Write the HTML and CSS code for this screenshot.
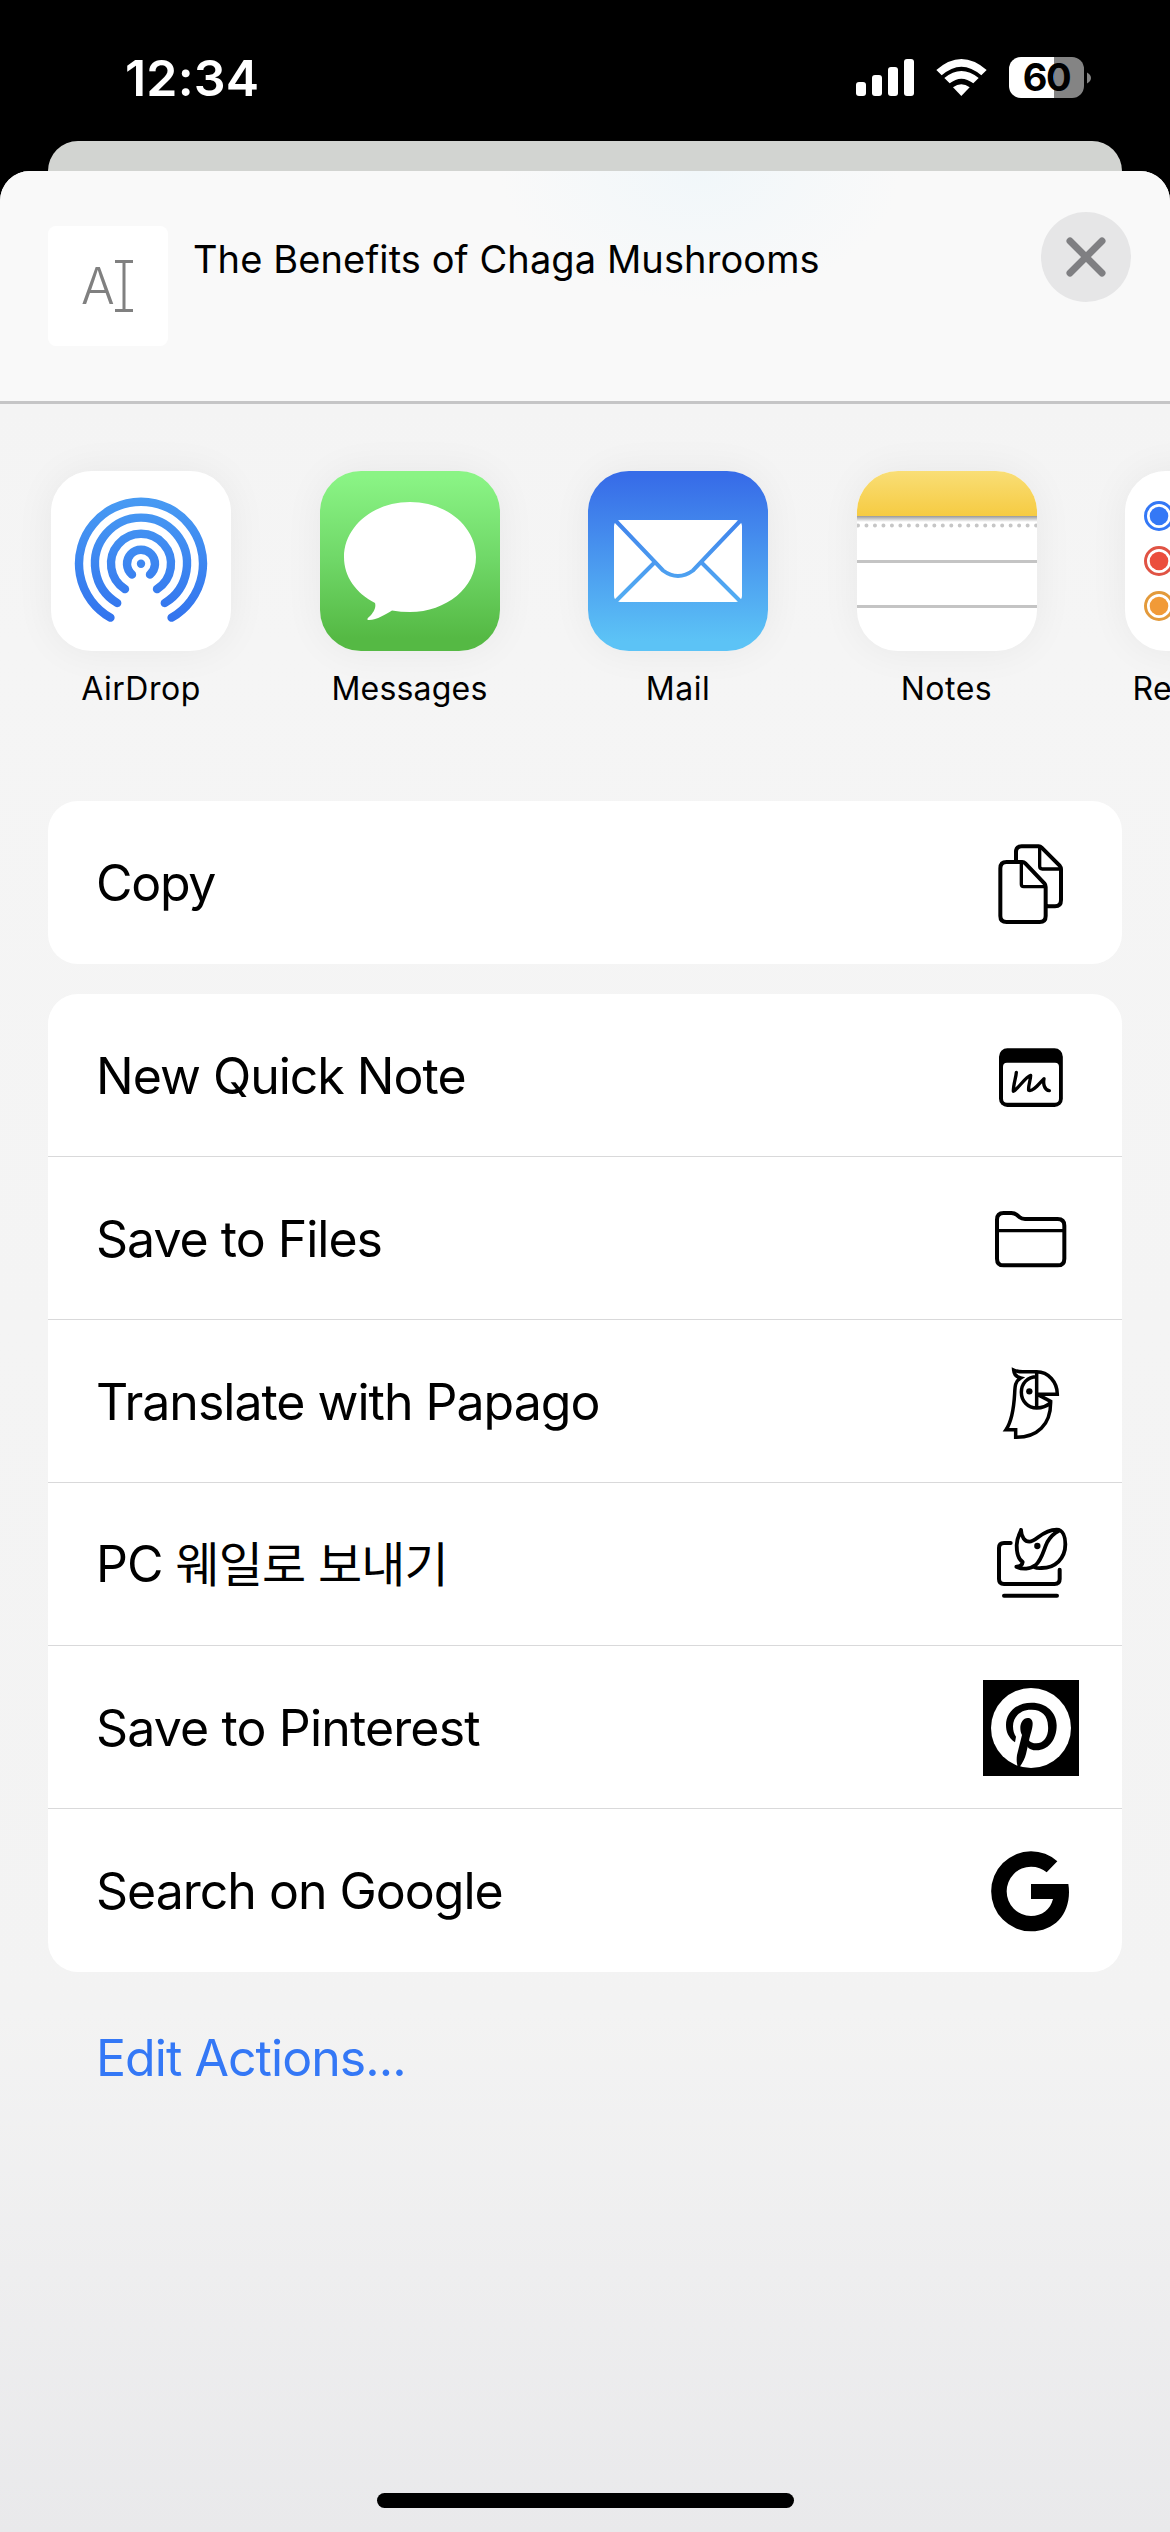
FILE: index.html
```html
<!DOCTYPE html>
<html lang="en">
<head>
<meta charset="utf-8">
<title>Share</title>
<link rel="stylesheet" href="styles.css">
</head>
<body>
<div class="phone">
  <div class="status">
    <span class="time">12:34</span>
    <div class="indicators">
      <svg class="signal" viewBox="0 0 58 37"><rect x="0" y="23" width="10" height="14" rx="3"/><rect x="16" y="16" width="10" height="21" rx="3"/><rect x="32" y="8" width="10" height="29" rx="3"/><rect x="48" y="0" width="10" height="37" rx="3"/></svg>
      <svg class="wifi" viewBox="348 87 153 111"><path d="M349 120Q424 54 500 120L484 136Q424 84 365 136Z"/><path d="M373 144Q424 102 476 144L460 160Q424 132 389 160Z"/><path d="M399 172Q424 153 449 172L424 198Z"/></svg>
      <div class="battery"><div class="charge">60</div><svg class="nub" viewBox="0 0 5 14"><path d="M0 0Q5 3 5 7T0 14Z"/></svg></div>
    </div>
  </div>
  <div class="behind"></div>
  <main class="sheet">
    <header class="header">
      <div class="thumb">
        <span class="letter">A</span>
        <svg class="ibeam" viewBox="0 0 20 52"><path d="M1 1.5H19M10 1.5V50.5M1 50.5H19"/></svg>
      </div>
      <h1 class="title">The Benefits of Chaga Mushrooms</h1>
      <button class="close" aria-label="Close"><svg viewBox="0 0 90 90"><path d="M29 29L61 61M61 29L29 61"/></svg></button>
    </header>

    <section class="apps">
      <div class="app">
        <svg class="app-icon" viewBox="0 0 180 180">
          <defs><linearGradient id="drop" gradientUnits="userSpaceOnUse" x1="0" y1="26" x2="0" y2="152"><stop offset="0" stop-color="#489bf3"/><stop offset="1" stop-color="#3273ee"/></linearGradient></defs>
          <rect width="180" height="180" fill="#fff"/>
          <g fill="none" stroke="url(#drop)" stroke-width="8.4" stroke-linecap="round"><path d="M59.4 146.6A62 62 0 1 1 120.6 146.6"/><path d="M66.2 132A46 46 0 1 1 113.8 132"/><path d="M74 118.1A30 30 0 1 1 106 118.1"/><path d="M81 103.5A14 14 0 1 1 99 103.5"/></g>
          <circle cx="90" cy="92.7" r="4.2" fill="#3f88f0"/>
        </svg>
        <span class="app-name">AirDrop</span>
      </div>
      <div class="app">
        <svg class="app-icon" viewBox="0 0 180 180">
          <defs><linearGradient id="msg" x2="0" y2="1"><stop offset=".03" stop-color="#8af485"/><stop offset=".5" stop-color="#6fd767"/><stop offset=".93" stop-color="#55b944"/></linearGradient></defs>
          <rect width="180" height="180" fill="url(#msg)"/>
          <path fill="#fff" d="M90 31C126.500 31 156 55.600 156 86S126.500 141 90 141Q81 141 72 139.500C66 143 57 149 49 149C46 149 47.500 147.500 49.500 145.500C53 142 56.500 137 55 132C36 122 24 106 24 86C24 55.600 53.500 31 90 31Z"/>
        </svg>
        <span class="app-name tight">Messages</span>
      </div>
      <div class="app">
        <svg class="app-icon" viewBox="0 0 180 180">
          <defs><linearGradient id="mail" gradientUnits="userSpaceOnUse" x1="0" y1="5" x2="0" y2="170"><stop offset="0" stop-color="#376ce8"/><stop offset="1" stop-color="#5cc3f6"/></linearGradient></defs>
          <rect width="180" height="180" fill="url(#mail)"/>
          <rect x="26" y="49" width="128" height="82" rx="6" fill="#fff"/>
          <path fill="none" stroke="url(#mail)" stroke-width="4" d="M26 48L75 99.500Q90 110.500 105 99.500L154 48M67 91L26 132M113 91L154 132"/>
        </svg>
        <span class="app-name">Mail</span>
      </div>
      <div class="app">
        <svg class="app-icon" viewBox="0 0 180 180">
          <defs><linearGradient id="note" x2="0" y2="1"><stop offset="0" stop-color="#f9de76"/><stop offset="1" stop-color="#f6cb42"/></linearGradient><linearGradient id="crease" x2="0" y2="1"><stop offset="0" stop-color="#999"/><stop offset="1" stop-color="#fff"/></linearGradient></defs>
          <rect width="180" height="180" fill="#fff"/>
          <rect width="180" height="45" fill="url(#note)"/><rect y="45" width="180" height="6" fill="url(#crease)"/>
          <path d="M1 54.500H181" fill="none" stroke="#c6c6c6" stroke-width="4" stroke-linecap="round" stroke-dasharray="0 8.480"/>
          <path d="M0 90.500H180M0 135.500H180" stroke="#c4c4c4" stroke-width="3"/>
        </svg>
        <span class="app-name">Notes</span>
      </div>
      <div class="app">
        <svg class="app-icon" viewBox="0 0 180 180">
          <rect width="180" height="180" fill="#fff"/>
          <g stroke-width="3" fill="none"><circle cx="34" cy="45" r="13.500" stroke="#3478f6"/><circle cx="34" cy="90" r="13.500" stroke="#e05344"/><circle cx="34" cy="135" r="13.500" stroke="#e39a3b"/></g>
          <circle cx="34" cy="45" r="9.300" fill="#3478f6"/><circle cx="34" cy="90" r="9.300" fill="#eb4e3d"/><circle cx="34" cy="135" r="9.300" fill="#f19a37"/>
        </svg>
        <span class="app-name">Reminders</span>
      </div>
    </section>

    <section class="actions">
      <div class="group">
        <div class="row"><span class="label copy">Copy</span>
          <svg class="glyph" viewBox="69 104 288 288"><path class="line" d="M187 185H140Q121 185 121 204V347Q121 365 140 365H239Q257 365 257 347V260Q257 254 253 249L196 189Q192 185 187 185ZM168 179V155Q168 138 185 138H236Q241 138 245 142L299 196Q303 201 303 206V299Q303 318 285 318H263"/><path class="line fine" d="M184 187V252Q184 259 191 259H255M239 140V198Q239 206 247 206H301"/></svg></div>
      </div>
      <div class="group">
        <div class="row"><span class="label">New Quick Note</span>
          <svg class="glyph" viewBox="69 24 288 288"><rect x="117" y="85" width="191.500" height="176" rx="25"/><rect x="129" y="128" width="168" height="120" rx="12" fill="#fff"/><path class="line fine" d="M169 157C168 173 160 192 160 214C174 208 196 170 212 166C212 181 204 197 206 211C219 217 240 187 252 176C249 191 253 211 268 212"/></svg></div>
        <div class="row"><span class="label">Save to Files</span>
          <svg class="glyph" viewBox="69 512 288 288"><path class="line" d="M111 598Q111 578 131 578H154Q164 578 171 584L179 591Q185 596 195 596H293Q313 596 313 616V715Q313 735 293 735H131Q111 735 111 715Z"/><path class="line fine" d="M113 631H311"/></svg></div>
        <div class="row"><span class="label">Translate with Papago</span>
          <svg class="glyph" viewBox="69 41 288 288"><path class="line bird" d="M230 94.500H188C176 94.500 168 92 161 89C162 101 170 110 182 113C165 123 165 138 164 159C161 212 154 245 138 268H167V291C231 292 273 254 272 183L232 162H292C292 125 265 94.500 230 94.500V203M230 109C203 109 184 129 184 156S204 203 230 203C247 203 261 197 272 187"/><circle cx="208" cy="153" r="9.500"/></svg></div>
        <div class="row"><span class="label">PC <span class="hangul">웨일로 보내기</span></span>
          <svg class="glyph" viewBox="69 50 288 288"><path class="line" d="M152 128H132Q117 128 117 143V236Q117 251 132 251H284Q299 251 299 236V208M132 286H291"/><path class="line whale" d="M183 89C179 102 170 113 170 135C170 162 175 177 188 185C187 194 181 199 169 199C187 208 211 207 226 195C247 177 250 149 262 125C272 108 282 98 297 91M183 89C184 111 195 124 208 124C230 124 245 89 290 88C309 88 316 110 316 132C316 175 285 203 245 203Q231 204 222 200"/><circle cx="232" cy="137" r="9.500"/></svg></div>
        <div class="row"><span class="label pinterest">Save to Pinterest</span>
          <svg class="glyph" viewBox="69 60 288 288"><rect x="69" y="60" width="288" height="288"/><circle cx="213" cy="204" r="120" fill="#fff"/><path d="M165 247C144 232 138 214 138 195C138 158 168 128 215 128C260 128 290 158 290 196C290 242 263 271 230 271C217 271 206 267 201 257L205 239C211 247 219 250 229 250C253 250 267 226 264 198C264 166 243 148 213 149C181 149 159 170 159 199C159 212 162 222 168 230Z"/><path d="M203 174C190 174 181 188 181 204C181 213 183 220 186 225L171 285C169 300 170 312 174 321H179C188 308 195 295 198 282L207 243C209 227 218 207 218 191C218 180 212 174 203 174Z"/></svg></div>
        <div class="row"><span class="label">Search on Google</span>
          <svg class="glyph" viewBox="69 548 288 288"><path d="M292 603A119.500 119.500 0 0 0 213 573A119.500 120 0 0 0 213 813C283 813 327 763 327 695Q327 683 325 671H213V716H279C271 748 246 767 213 767A73 74 0 0 1 213 619Q241 619 260 636Z"/></svg></div>
      </div>
      <a class="edit">Edit Actions...</a>
    </section>
    <div class="home"></div>
  </main>
</div>
</body>
</html>
```
FILE: styles.css
```css
* { box-sizing: border-box; }
body { margin: 0; background: #000; }
.phone {
  width: 1170px;
  height: 2532px;
  overflow: hidden;
  display: flex;
  flex-direction: column;
  background: #000;
  color: #000;
  font-family: Inter, "Noto Sans CJK KR", sans-serif;
}

.status {
  height: 141px;
  display: flex;
  justify-content: space-between;
  padding: 57px 79px 0 125px;
  color: #fff;
}
.time { font-size: 50px; font-weight: 600; line-height: 42px; letter-spacing: 0.2px; }
.indicators { display: flex; align-items: flex-start; fill: #fff; }
.signal { width: 58px; height: 37px; margin: 2px 22px 0 0; }
.wifi { width: 51px; height: 37px; margin: 2px 22px 0 0; }
.battery { display: flex; align-items: center; gap: 3px; }
.charge {
  width: 75px;
  height: 41px;
  border-radius: 12px;
  background: linear-gradient(90deg, #fff 60%, #848484 60%);
  color: #000;
  font-size: 38px;
  font-weight: 650;
  line-height: 41px;
  letter-spacing: -1.5px;
  text-align: center;
}
.nub { width: 4px; height: 14px; fill: #848484; }

.behind { height: 30px; margin: 0 48px; border-radius: 30px 30px 0 0; background: #d2d4d1; }
.sheet {
  flex: 1;
  display: flex;
  flex-direction: column;
  border-radius: 30px 30px 0 0;
  overflow: hidden;
  background: linear-gradient(#f3f3f3 0, #f5f5f5 20%, #f3f3f3 78%, #e9e9eb 100%);
}
.header {
  height: 233px;
  display: flex;
  align-items: flex-start;
  padding: 41px 39px 0 48px;
  border-bottom: 3px solid #c5c5c6;
  background: radial-gradient(ellipse 200px 130px at 700px 0, #f1f7fa, #f9f9f9);
}
.thumb {
  width: 120px;
  height: 120px;
  margin-top: 14px;
  border-radius: 8px;
  background: #fff;
  display: flex;
  align-items: center;
  padding-left: 33px;
}
.letter { font-size: 50px; font-weight: 350; line-height: 60px; width: 33px; color: #808080; }
.ibeam { width: 20px; height: 52px; fill: none; stroke: #808080; stroke-width: 3; }
.title { flex: 1; margin: 23px 0 0 25px; font-size: 38px; font-weight: 400; line-height: 48px; letter-spacing: 0.09px; white-space: nowrap; }
.close { width: 90px; height: 90px; padding: 0; border: 0; border-radius: 50%; background: #e6e6e7; }
.close svg { display: block; fill: none; stroke: #7f7f82; stroke-width: 7; stroke-linecap: round; }

.apps { display: flex; gap: 88.5px; height: 397px; padding: 67px 0 0 51px; }
.app { flex: none; width: 180px; display: flex; flex-direction: column; align-items: center; }
.app-icon { width: 180px; height: 180px; border-radius: 41px; box-shadow: 0 0 40px rgba(0, 0, 0, 0.055); }
.app-name { margin-top: 17px; font-size: 32px; line-height: 42px; letter-spacing: 0.5px; }
.tight { letter-spacing: 0.2px; }

.actions { display: flex; flex-direction: column; gap: 30px; padding: 0 48px; }
.group { border-radius: 30px; background: #fff; overflow: hidden; }
.row { height: 163px; display: flex; align-items: center; justify-content: space-between; padding: 0 43px 0 48px; }
.row + .row { box-shadow: 0 -1px #d9d9da; }
.label { font-size: 50px; line-height: 64px; letter-spacing: -1px; white-space: nowrap; }
.copy { letter-spacing: -1.3px; }
.pinterest { letter-spacing: -0.85px; }
.hangul { font-size: 48px; letter-spacing: -0.9px; }
.glyph { width: 96px; height: 96px; flex: none; fill: #000; }
.line { fill: none; stroke: #000; stroke-width: 12; stroke-linecap: round; stroke-linejoin: round; }
.fine { stroke-width: 10; }
.whale { stroke-width: 11.5; }
.bird { stroke-width: 10.5; stroke-linecap: butt; stroke-linejoin: miter; }
.edit { margin: 24px 0 0 48px; color: #3478f6; font-size: 50px; line-height: 64px; letter-spacing: -0.95px; }
.home { width: 417px; height: 15px; margin: auto auto 24px; border-radius: 8px; background: #000; }
```
